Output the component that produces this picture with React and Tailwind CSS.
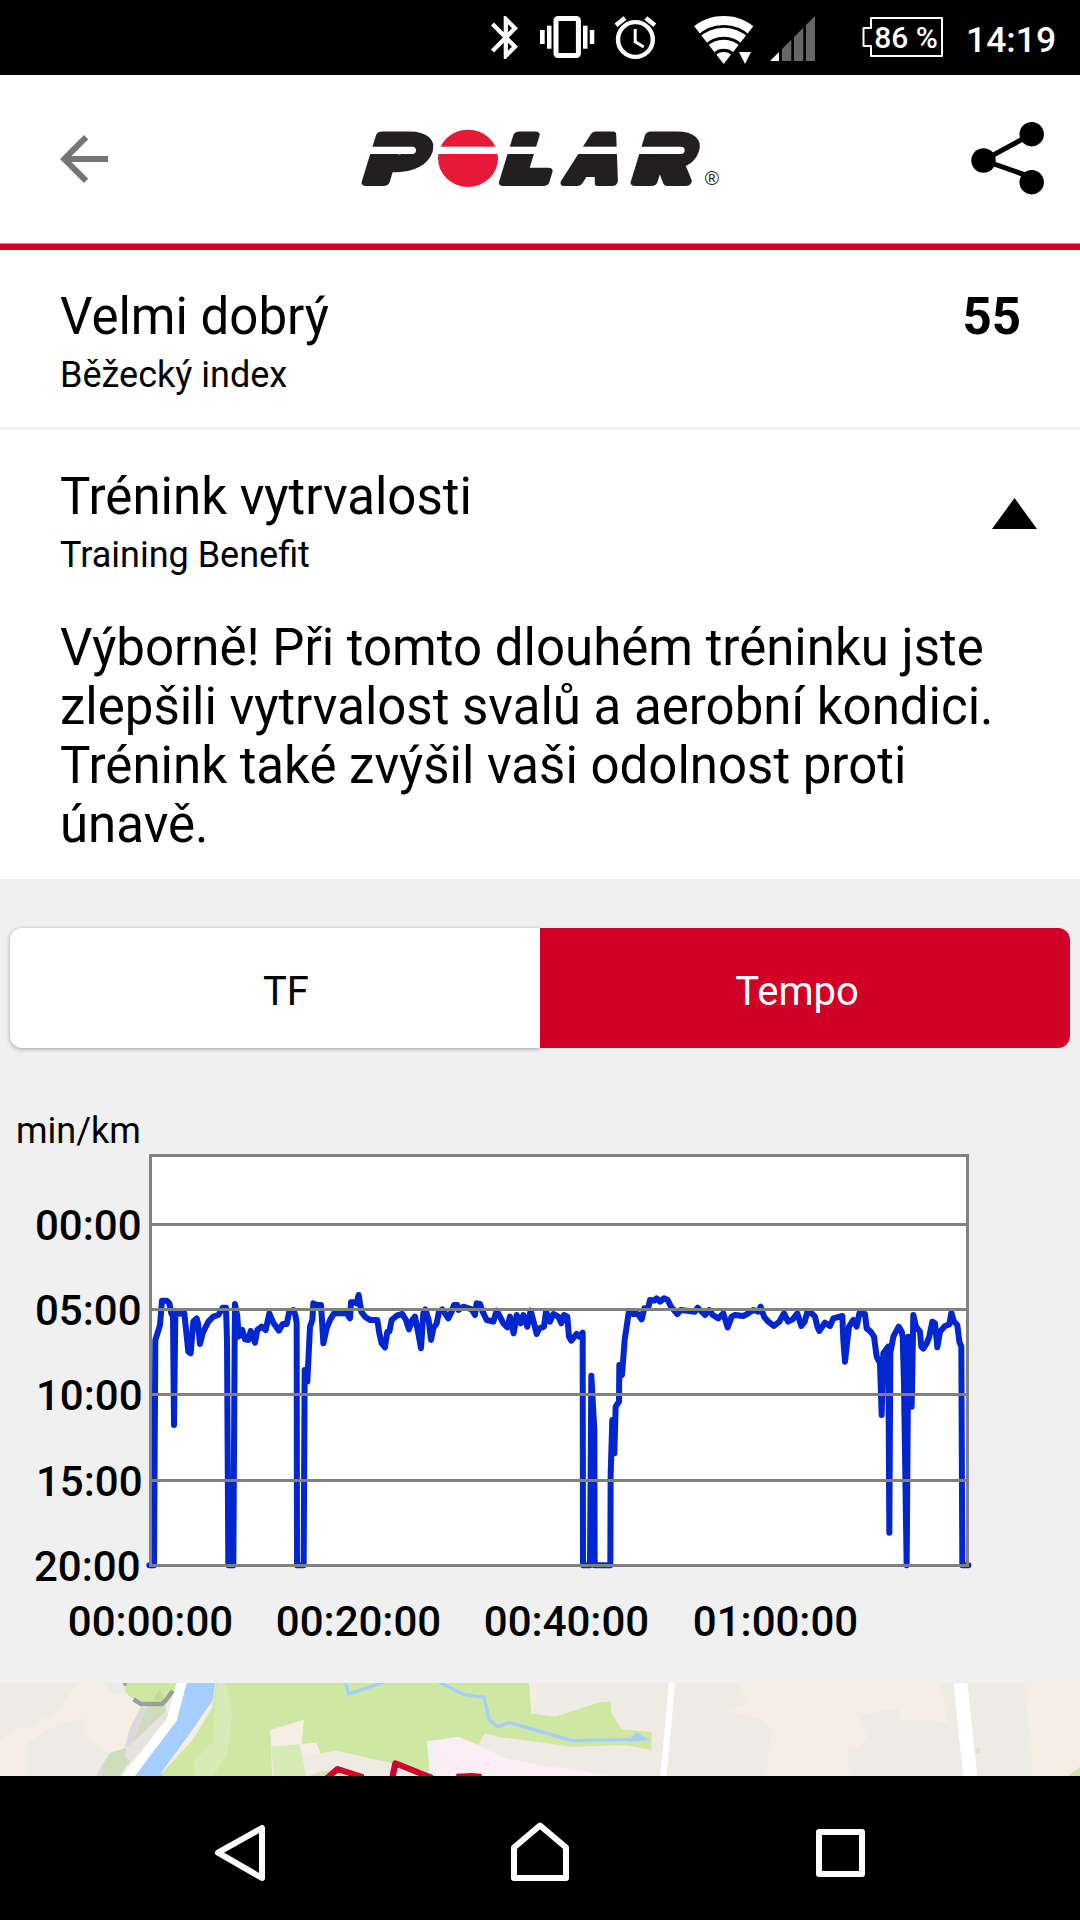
import React, { useState } from "react";

// pace curve, in thirds of a pixel measured from the left edge of the screen
const pace =
  "448,1276 462,1276 466,600 474,575 480,555 486,482 500,482 508,490 514,520 519,530 522,855 526,522 553,520 565,635 572,640 580,545 590,535 594,550 600,612 608,580 615,565 625,545 640,530 655,525 668,503 678,503 681,600 685,1276 700,1276 704,600 705,492 712,530 716,590 727,570 735,598 745,600 752,573 765,608 772,570 785,560 797,570 808,520 820,548 837,572 848,552 860,552 868,515 880,510 886,525 890,550 891,1276 911,1276 914,690 922,725 930,560 937,540 940,490 950,495 963,495 966,540 970,610 980,565 990,540 1002,520 1040,520 1050,535 1053,487 1065,487 1070,490 1076,465 1084,515 1095,530 1110,540 " +
  "1132,540 1138,580 1145,610 1155,622 1162,575 1168,575 1175,540 1190,527 1207,522 1218,540 1227,568 1237,540 1245,530 1255,580 1263,625 1270,520 1276,508 1286,540 1293,600 1300,565 1310,550 1317,515 1327,508 1335,520 1345,535 1355,515 1362,495 1372,495 1375,510 1390,500 1415,508 1425,525 1430,490 1440,492 1448,515 1460,540 1480,545 1490,512 1500,530 1510,550 1522,562 1530,530 1541,580 1550,525 1562,550 1570,525 1582,560 1592,512 1602,550 1610,582 1618,565 1632,560 1638,515 1650,545 1660,522 1675,530 1684,550 1692,525 1702,530 1707,590 1714,602 1730,582 1738,590 1748,578 1749,1276 1770,1276 1774,707 1783,870 1784,1276 1831,1276 1832,1000 1837,840 1843,940 1847,800 1857,785 1858,675 1866,705 1874,600 1886,518 1898,522 1913,522 1925,538 1933,505 1945,503 1950,480 1962,482 1970,475 1980,485 1992,475 2003,480 2013,500 2032,522 2042,510 2085,515 2093,503 " +
  "2100,510 2115,525 2128,510 2138,525 2155,535 2170,520 2183,562 2195,530 2205,525 2230,528 2245,520 2260,510 2275,515 2282,500 2292,530 2305,545 2322,558 2338,545 2352,520 2364,545 2378,538 2392,520 2404,558 2414,545 2422,515 2435,520 2445,530 2452,560 2458,573 2475,548 2490,558 2500,535 2527,528 2530,600 2535,665 2540,620 2547,560 2560,540 2570,560 2578,520 2595,522 2600,565 2612,575 2622,590 2630,650 2640,670 2645,825 2650,640 2665,620 2668,1178 2671,640 2680,590 2696,560 2705,575 2708,590 2712,730 2720,1276 2725,590 2735,800 2740,525 2748,560 2760,575 2764,620 2770,626 2780,610 2788,590 2797,545 2805,550 2812,622 2820,575 2835,558 2848,553 2854,518 2862,545 2872,555 2878,605 2884,620 2887,1276 2905,1276";

const yTicks = [
  { label: "00:00", y: 124.5, right: 141.5 },
  { label: "05:00", y: 209.5, right: 141.5 },
  { label: "10:00", y: 294.5, right: 142.5 },
  { label: "15:00", y: 380.5, right: 142.5 },
  { label: "20:00", y: 465.5, right: 140.5 },
];

const xTicks = [
  { label: "00:00:00", x: 150.5 },
  { label: "00:20:00", x: 358.5 },
  { label: "00:40:00", x: 566.5 },
  { label: "01:00:00", x: 775.5 },
];

const StatusBar = () => (
  <div className="h-[75px] bg-black">
    <svg width="1080" height="75" viewBox="0 0 1080 75" fill="#fff">
      <defs>
        <clipPath id="fan">
          <path d="M723.7 64L694 26 680 0h88l-14.5 26z" />
        </clipPath>
        <clipPath id="ramp">
          <path d="M770 61L815 16v45z" />
        </clipPath>
      </defs>

      {/* bluetooth */}
      <path
        transform="translate(480.4 11.7) scale(2.12 2.15)"
        d="M17.71 7.71L12 2h-1v7.59L6.41 5 5 6.41 10.59 12 5 17.59 6.41 19 11 14.41V22h1l5.71-5.71-4.3-4.29 4.3-4.29zM13 5.83l1.88 1.88L13 9.59V5.83zm1.88 10.46L13 18.17v-3.76l1.88 1.88z"
      />

      {/* vibrate */}
      <rect x="540" y="30" width="4.7" height="14" />
      <rect x="547" y="25.7" width="4.5" height="23" />
      <rect x="556" y="18.5" width="22.4" height="37" rx="2" fill="none" stroke="#fff" strokeWidth="5" />
      <rect x="583" y="25.7" width="4.5" height="23" />
      <rect x="589.8" y="30" width="4.5" height="14" />

      {/* alarm */}
      <g fill="none" stroke="#fff">
        <circle cx="635.4" cy="39.5" r="17.4" strokeWidth="4.4" />
        <path d="M635.2 29v12.8l8.6 5.2" strokeWidth="3" />
        <path d="M616 25.2l9-7.2M654.8 25.2l-9-7.2" strokeWidth="4.6" />
      </g>

      {/* wifi */}
      <g clipPath="url(#fan)">
        <circle cx="723.7" cy="63.7" r="11.7" />
        <g fill="none" stroke="#fff" strokeWidth="9">
          <circle cx="723.7" cy="63.7" r="19.4" />
          <circle cx="723.7" cy="63.7" r="31.4" />
          <circle cx="723.7" cy="63.7" r="43.2" />
        </g>
      </g>
      <path d="M735 50.5h20v14h-13z" fill="#000" />
      <path d="M739 52h12l-6 12z" />

      {/* signal */}
      <g clipPath="url(#ramp)">
        <rect x="770" y="16" width="9" height="45" />
        <g fill="#666">
          <rect x="782" y="16" width="9.3" height="45" />
          <rect x="794" y="16" width="9.3" height="45" />
          <rect x="806" y="16" width="9.3" height="45" />
        </g>
      </g>

      {/* battery */}
      <path d="M871 18h71v38h-71V46h-7.5V28h7.5z" fill="none" stroke="#fff" strokeWidth="2" strokeLinejoin="round" />
      <text x="906" y="48" textAnchor="middle" className="font-[Roboto,sans-serif] text-[30px] font-medium">
        86 %
      </text>
      <text x="966" y="52" className="font-[Roboto,sans-serif] text-[35.5px] font-medium">
        14:19
      </text>
    </svg>
  </div>
);

const PolarLogo = () => (
  <svg width="400" height="100" viewBox="0 0 1200 300" className="ml-[220px]">
    <g fill="#231f20" stroke="#231f20" strokeWidth="24" strokeLinejoin="round" className="font-[Inter,sans-serif] text-[192px] font-black">
      <text transform="translate(69 215) skewX(-17) scale(1.36 1)">P</text>
      <text transform="translate(481 215) skewX(-17) scale(1.28 1)">L</text>
      <text transform="translate(670 215) skewX(-17) scale(1.02 1)">A</text>
      <text transform="translate(876 215) skewX(-17) scale(1.3 1)">R</text>
    </g>
    <ellipse cx="384" cy="145" rx="90" ry="86" fill="#e61937" />
    <g fill="#fff">
      <rect x="60" y="110" width="168" height="22" rx="11" />
      <rect x="280" y="110" width="590" height="22" />
      <rect x="860" y="110" width="174" height="22" rx="11" />
    </g>
    <text x="1094" y="226" fill="#231f20" className="font-['Liberation_Sans',sans-serif] text-[58px]">®</text>
  </svg>
);

const Header = () => (
  <header className="flex h-[175px] items-start border-b-[6px] border-[#d10026] bg-white pt-[35px] shadow-[inset_0_-1px_0_#999]">
    <svg width="72" height="72" viewBox="0 0 24 24" className="mt-[13px] ml-[48px]" fill="#757575">
      <path d="M20 11H7.83l5.59-5.59L12 4l-8 8 8 8 1.41-1.41L7.83 13H20z" />
    </svg>
    <PolarLogo />
    <svg width="76" height="76" viewBox="0 0 76 76" className="mt-[10px] ml-[231px]">
      <path d="M60.7 14.2L12.5 40.3l48.2 17" fill="none" stroke="#000" strokeWidth="5" />
      <circle cx="12.5" cy="40.5" r="12.2" />
      <circle cx="60.7" cy="14.2" r="12.2" />
      <circle cx="60.7" cy="62.2" r="12.2" />
    </svg>
  </header>
);

const PaceChart = () => (
  <svg width="1080" height="580" viewBox="0 3 1080 580" className="mt-[55px] block font-[Roboto,sans-serif]">
    <text x="16" y="42.5" className="text-[36px]">min/km</text>
    <rect x="150.5" y="55.5" width="817" height="410" fill="#fff" />
    <polyline
      transform="translate(0 40) scale(0.33333)"
      points={pace}
      fill="none"
      stroke="#0026d0"
      strokeWidth="18"
      strokeLinecap="round"
      strokeLinejoin="round"
    />
    <rect x="150.5" y="55.5" width="817" height="410" fill="none" stroke="#808080" strokeWidth="3" />
    {yTicks.map((tick) => (
      <g key={tick.label}>
        <path d={`M150.5 ${tick.y}H967.5`} stroke="#808080" strokeWidth="3" />
        <text x={tick.right} y={tick.y + 15} textAnchor="end" className="text-[42px] font-medium">
          {tick.label}
        </text>
      </g>
    ))}
    {xTicks.map((tick) => (
      <text key={tick.label} x={tick.x} y="535.5" textAnchor="middle" className="text-[42px] font-medium">
        {tick.label}
      </text>
    ))}
  </svg>
);

const RouteMap = () => (
  <svg width="1080" height="93" viewBox="0 39 3136 279" preserveAspectRatio="none" className="block bg-[#eeebe5]">
    <g fill="#f6ede5">
      <path d="M0 212L50 172H98L123 145 150 148 180 105 225 39H305L322 70H365L480 120 375 230 320 250 237 195 257 150 240 145 180 160 130 185 75 222V318H0z" />
      <path d="M2148 39L2171 107 2115 115 2116 125 2213 150 2245 185 2231 240 2226 318H2466L2460 240 2500 228 2518 200 2495 135 2608 115 2613 153 2698 148 2753 158 2731 39z" />
      <path d="M2976 39L3000 318H3136V39z" />
      <path d="M620 90L625 39H640V318H468V308z" />
    </g>
    <path d="M408 112H430L425 150 375 238 362 232 375 180zM280 318L300 275V318z" fill="#dcd8dc" />
    <path d="M430 108L480 100 482 130 385 220zM320 248L365 233 378 275 345 318H298L300 280z" fill="#cddcbb" />
    <path d="M480 125L500 140 380 275 362 262 370 232z" fill="#e6e3de" />
    <path d="M362 39H515L505 60 475 100H410L385 85 365 70z" fill="#cee8a4" />
    <path d="M445 90L463 57 480 90z" fill="#c2dc98" />
    <path d="M388 88L410 102H470L482 90 502 62M358 41L368 41" fill="none" stroke="#9c9e9c" strokeWidth="13" />
    <path d="M513 39H545L515 152 392 318H355L485 145z" fill="#fff" />
    <path d="M542 39H625L618 90 548 195 468 308 472 318H392L513 152z" fill="#a5cdff" />
    <path
      d="M627 39H1537L1543 130 1612 140 1740 97 1773 95 1775 130 1805 178 1892 186V240L1815 226 1655 230 1568 217 1460 203 1407 190 1390 225 1330 200 1240 213 1250 305 1140 280 975 242 930 250 918 218 875 222 882 150 785 180 790 318H470V308L560 210 617 110z"
      fill="#cee8a4"
    />
    <path d="M630 39H655L675 130 660 250 620 318H565L563 272 618 215zM788 230L868 220 890 318H795z" fill="#d6ebb6" />
    <path d="M785 180L882 150 875 222 788 230zM872 225L918 218 930 250 880 258zM888 300L940 290 890 318z" fill="#f6ede5" />
    <path d="M1537 39H1556V75L1548 130H1543z" fill="#f6ede5" />
    <path d="M900 318L935 303 975 300 1010 318z" fill="#cfe2c4" />
    <path d="M1240 213L1265 212V318H1248z" fill="#f3f1f4" />
    <path d="M1265 212L1330 200 1470 265 1568 285 1700 303 1768 318H1265z" fill="#fdedf5" />
    <g fill="none" stroke="#a5cdff" strokeWidth="10">
      <path d="M1003 36L1012 72 1120 34" />
      <path d="M1275 36L1345 73 1405 82 1412 110 1420 150 1445 170 1480 158 1568 184 1660 212 1830 208" />
    </g>
    <path d="M1822 216L1848 187 1888 210z" fill="#a5cdff" />
    <g fill="none" stroke="#fff">
      <path d="M1951 39L1940 170 1926 318" strokeWidth="18" />
      <path d="M2789 39L2817 318" strokeWidth="40" />
    </g>
    <path d="M2830 236L2846 231V250H2833z" fill="#d6e8cf" />
    <path d="M3103 318L3136 290V318z" fill="#cee8a4" />
    <path d="M950 324L980 297 1055 322M1139 324L1148 280 1255 324M1325 320L1370 318 1398 321" fill="none" stroke="#d10026" strokeWidth="18" strokeLinejoin="round" />
  </svg>
);

const NavBar = () => (
  <nav className="h-[144px] bg-black">
    <svg width="1080" height="144" viewBox="0 0 1080 144" fill="none" stroke="#fff" strokeWidth="6" strokeLinejoin="round">
      <path d="M218 76.7L262 52v50z" />
      <path d="M514 102V71.5L540 49.5l26 22V102z" />
      <rect x="819" y="56" width="43" height="42" />
    </svg>
  </nav>
);

const App = () => {
  const [tab, setTab] = useState("Tempo");
  const tabStyle = (name) =>
    tab === name ? "bg-[#d10026] text-white" : "bg-white text-black shadow-[0_1px_4px_rgba(0,0,0,0.35)]";

  return (
    <div className="flex h-[1920px] w-[1080px] flex-col overflow-hidden bg-[#f0f0f0] font-[Roboto,sans-serif] text-black">
      <StatusBar />
      <Header />

      <section className="flex h-[180px] items-start justify-between border-b-[3px] border-[#f0f0f0] bg-white pt-[37px] pr-[59px] pl-[60px]">
        <div>
          <h2 className="text-[51px] leading-[59px]">Velmi dobrý</h2>
          <p className="mt-[8px] text-[36px] leading-[42px]">Běžecký index</p>
        </div>
        <span className="text-[51px] leading-[59px] font-bold">55</span>
      </section>

      <section className="h-[449px] bg-white pt-[37px] pr-[43px] pl-[60px]">
        <div className="flex items-start justify-between">
          <div>
            <h2 className="text-[51px] leading-[59px]">Trénink vytrvalosti</h2>
            <p className="mt-[8px] text-[36px] leading-[42px]">Training Benefit</p>
          </div>
          <svg width="45" height="31" viewBox="0 0 45 31" className="mt-[31px]">
            <path d="M22.5 0L45 31H0z" />
          </svg>
        </div>
        <p className="mt-[42px] text-[51px] leading-[59px]">
          Výborně! Při tomto dlouhém tréninku jste
          <br />
          zlepšili vytrvalost svalů a aerobní kondici.
          <br />
          Trénink také zvýšil vaši odolnost proti
          <br />
          únavě.
        </p>
      </section>

      <section className="h-[804px] pt-[49px]">
        <div className="mx-[10px] flex h-[120px] text-[40px]">
          <button onClick={() => setTab("TF")} className={`w-1/2 rounded-l-[12px] pt-[7px] pl-[22px] ${tabStyle("TF")}`}>
            TF
          </button>
          <button onClick={() => setTab("Tempo")} className={`w-1/2 rounded-r-[12px] pt-[7px] pr-[16px] ${tabStyle("Tempo")}`}>
            Tempo
          </button>
        </div>
        <PaceChart />
      </section>

      <RouteMap />
      <NavBar />
    </div>
  );
};

export default App;
